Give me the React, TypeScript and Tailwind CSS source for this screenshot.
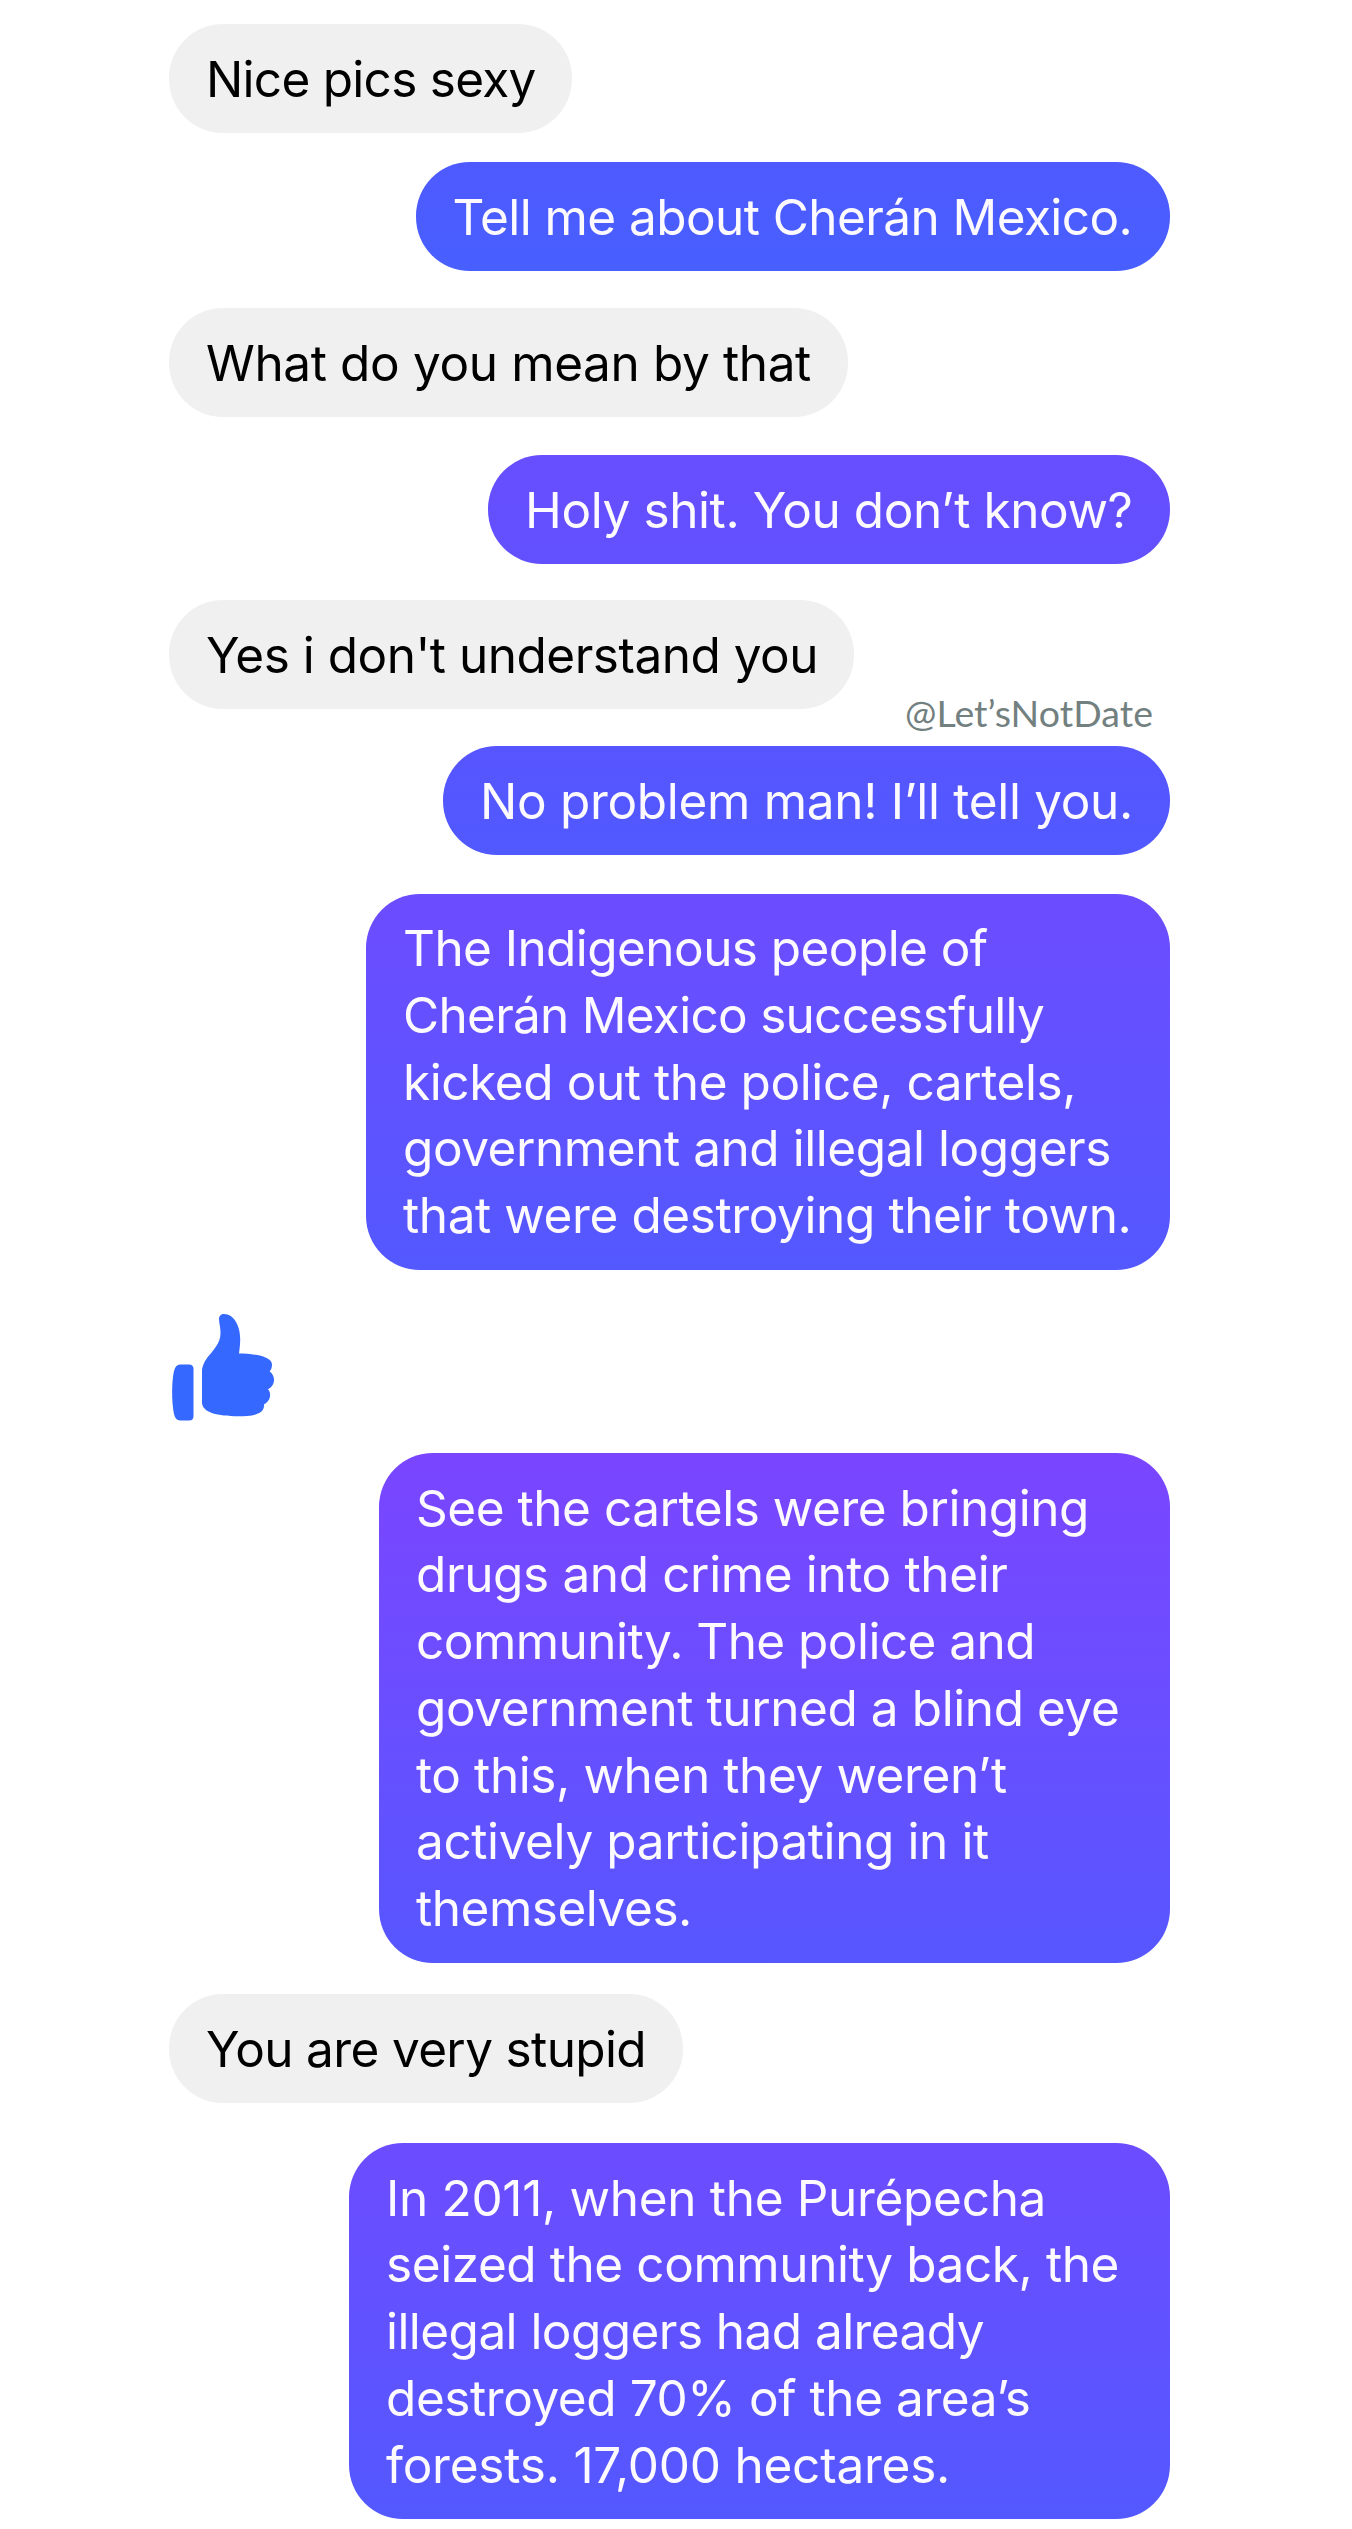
type Line = [text: string, tracking: string];

function Lines({ lines }: { lines: Line[] }) {
  return (
    <>
      {lines.map(([text, tracking]) => (
        <p key={text} className={`whitespace-nowrap ${tracking}`}>
          {text}
        </p>
      ))}
    </>
  );
}

function Bubble({ lines, className }: { lines: Line[]; className: string }) {
  return (
    <div
      className={`rounded-[54px] pl-[37px] pt-[21.6px] text-[49.5px] leading-[66.75px] ${className}`}
    >
      <Lines lines={lines} />
    </div>
  );
}

function Received({ lines, className }: { lines: Line[]; className: string }) {
  return <Bubble lines={lines} className={`self-start bg-[#f0f0f0] text-black ${className}`} />;
}

function Sent({ lines, className }: { lines: Line[]; className: string }) {
  return <Bubble lines={lines} className={`self-end bg-linear-to-b text-[#fcfaff] ${className}`} />;
}

function ThumbsUp() {
  return (
    <svg viewBox="0 0 103 108" className="mt-[44.5px] ml-[3px] h-[108px] w-[103px] self-start fill-[#3568ff]" aria-label="Like">
      <path d="M8 50.5H17Q21.5 50.5 21.5 55V102Q21.5 106.5 17 106.5H8Q3.5 106.5 2 100C-.5 88 -.5 68 2 57Q3.5 50.5 8 50.5Z" />
      <path d="M52 0C62 0 68.2 12 68.2 25C68.2 31 67.5 35 67 39.5C80 39.5 100 42 100 50.5C100 54 99 56 97.5 57.3C104 62 103.5 71.5 96 75.3C99.5 79 99 87 92 90.3C93 101.5 78 102.3 66 102.3C46 102.3 30 98.5 30 88.500V58C30 42 48.5 36 48.5 19C48.5 13 47 9 47 5C47 2 49 0 52 0Z" />
    </svg>
  );
}

export default function App() {
  return (
    <main className="flex h-[2529px] w-[1352px] flex-col bg-white pl-[169px] pr-[182px] pt-[24px] font-['Inter',sans-serif]">
      <Received className="h-[109px] w-[403px]" lines={[["Nice pics sexy", "tracking-[-0.72px]"]]} />
      <Sent
        className="mt-[29px] h-[109px] w-[754.5px] from-[#4e5aff] to-[#485fff]"
        lines={[["Tell me about Cherán Mexico.", "tracking-[-0.57px]"]]}
      />
      <Received
        className="mt-[37px] h-[109px] w-[679px]"
        lines={[["What do you mean by that", "tracking-[-0.37px]"]]}
      />
      <Sent
        className="mt-[38px] h-[109px] w-[682px] from-[#674eff] to-[#6250ff]"
        lines={[["Holy shit. You don’t know?", "tracking-[-0.4px]"]]}
      />
      <Received
        className="mt-[36px] h-[109px] w-[685px]"
        lines={[["Yes i don't understand you", "tracking-[-0.49px]"]]}
      />
      <p className="mt-[-19px] mr-[17px] h-[56px] self-end whitespace-nowrap font-['Lato',sans-serif] text-[37.5px] leading-[46px] tracking-[0.06px] text-[#738080]">
        @Let’sNotDate
      </p>
      <Sent
        className="h-[109px] w-[727px] from-[#5755ff] to-[#5059ff]"
        lines={[["No problem man! I’ll tell you.", "tracking-[-0.31px]"]]}
      />
      <Sent
        className="mt-[38.5px] h-[376px] w-[804px] from-[#6c4cff] to-[#5358ff]"
        lines={[
          ["The Indigenous people of", "tracking-[-0.57px]"],
          ["Cherán Mexico successfully", "tracking-[-0.72px]"],
          ["kicked out the police, cartels,", "tracking-[-0.42px]"],
          ["government and illegal loggers", "tracking-[-0.44px]"],
          ["that were destroying their town.", "tracking-[-0.4px]"],
        ]}
      />
      <ThumbsUp />
      <Sent
        className="mt-[31px] h-[509.5px] w-[791px] from-[#7a45ff] to-[#5656ff]"
        lines={[
          ["See the cartels were bringing", "tracking-[-0.46px]"],
          ["drugs and crime into their", "tracking-[-0.37px]"],
          ["community. The police and", "tracking-[-0.54px]"],
          ["government turned a blind eye", "tracking-[-0.41px]"],
          ["to this, when they weren’t", "tracking-[-0.4px]"],
          ["actively participating in it", "tracking-[-0.4px]"],
          ["themselves.", "tracking-[-0.47px]"],
        ]}
      />
      <Received
        className="mt-[31.5px] h-[109px] w-[514px]"
        lines={[["You are very stupid", "tracking-[-0.64px]"]]}
      />
      <Sent
        className="mt-[40px] h-[376px] w-[821px] from-[#6c4cff] to-[#5358ff]"
        lines={[
          ["In 2011, when the Purépecha", "tracking-[-0.31px]"],
          ["seized the community back, the", "tracking-[-0.42px]"],
          ["illegal loggers had already", "tracking-[-0.56px]"],
          ["destroyed 70% of the area’s", "tracking-[-0.43px]"],
          ["forests. 17,000 hectares.", "tracking-[-0.22px]"],
        ]}
      />
    </main>
  );
}
